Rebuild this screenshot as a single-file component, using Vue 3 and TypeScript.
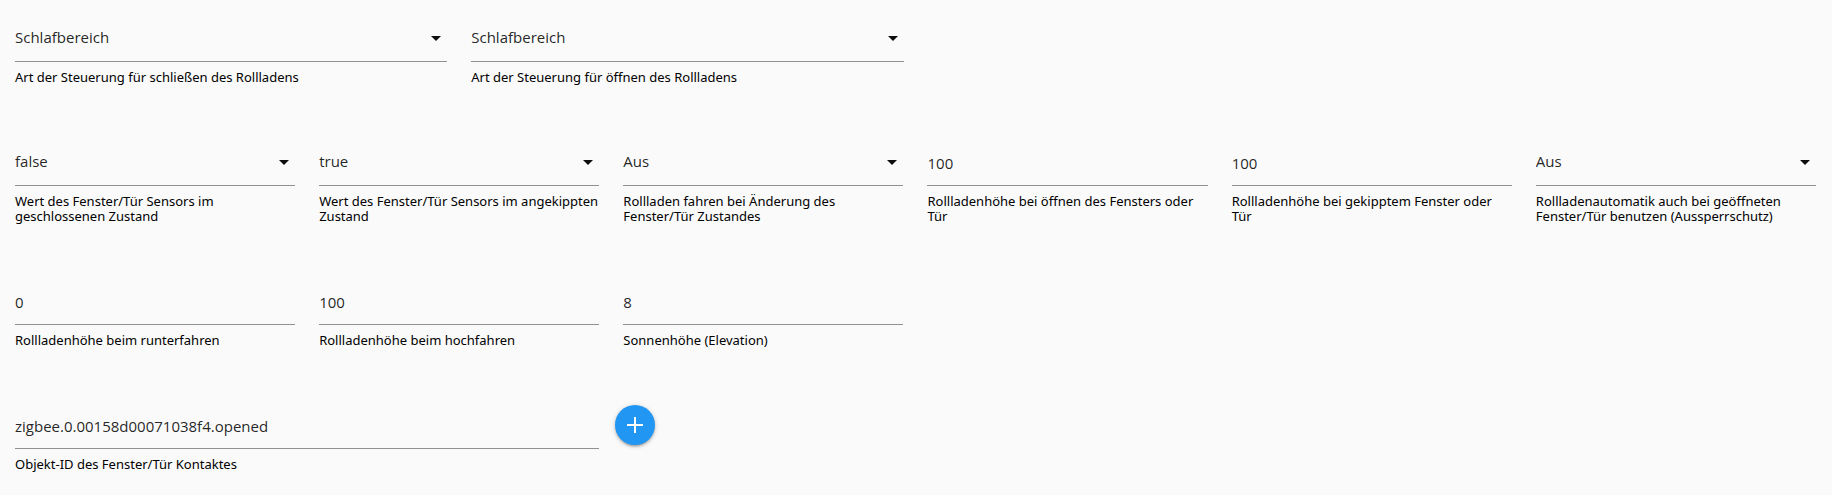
<script setup lang="ts">
import { reactive } from 'vue'

interface Field {
  id: string
  kind: 'select' | 'text'
  span: 'narrow' | 'wide'
  value: string
  label: string
  options?: string[]
}

const control = ['Schlafbereich', 'Wohnbereich', 'Aus']
const states = ['true', 'false']
const modes = ['Aus', 'An']

const rows = reactive<Field[][]>([
  [
    { id: 'typeDown', kind: 'select', span: 'wide', value: 'Schlafbereich', options: control, label: 'Art der Steuerung für schließen des Rollladens' },
    { id: 'typeUp', kind: 'select', span: 'wide', value: 'Schlafbereich', options: control, label: 'Art der Steuerung für öffnen des Rollladens' },
  ],
  [
    { id: 'closedState', kind: 'select', span: 'narrow', value: 'false', options: states, label: 'Wert des Fenster/Tür Sensors im geschlossenen Zustand' },
    { id: 'tiltedState', kind: 'select', span: 'narrow', value: 'true', options: states, label: 'Wert des Fenster/Tür Sensors im angekippten Zustand' },
    { id: 'moveOnChange', kind: 'select', span: 'narrow', value: 'Aus', options: modes, label: 'Rollladen fahren bei Änderung des Fenster/Tür Zustandes' },
    { id: 'heightOpen', kind: 'text', span: 'narrow', value: '100', label: 'Rollladenhöhe bei öffnen des Fensters oder Tür' },
    { id: 'heightTilted', kind: 'text', span: 'narrow', value: '100', label: 'Rollladenhöhe bei gekipptem Fenster oder Tür' },
    { id: 'lockout', kind: 'select', span: 'narrow', value: 'Aus', options: modes, label: 'Rollladenautomatik auch bei geöffneten Fenster/Tür benutzen (Aussperrschutz)' },
  ],
  [
    { id: 'heightDown', kind: 'text', span: 'narrow', value: '0', label: 'Rollladenhöhe beim runterfahren' },
    { id: 'heightUp', kind: 'text', span: 'narrow', value: '100', label: 'Rollladenhöhe beim hochfahren' },
    { id: 'elevation', kind: 'text', span: 'narrow', value: '8', label: 'Sonnenhöhe (Elevation)' },
  ],
])

const contact = reactive({ value: 'zigbee.0.00158d00071038f4.opened' })
</script>

<template>
  <form class="settings" @submit.prevent>
    <div v-for="(row, index) in rows" :key="index" class="row">
      <div v-for="field in row" :key="field.id" class="field" :class="field.span">
        <div v-if="field.kind === 'select'" class="select-box">
          <select :id="field.id" v-model="field.value" class="control">
            <option v-for="option in field.options" :key="option" :value="option">{{ option }}</option>
          </select>
          <svg class="caret" viewBox="0 0 24 24" aria-hidden="true"><path d="M7 10l5 5 5-5z" /></svg>
        </div>
        <input v-else :id="field.id" v-model="field.value" class="control" type="text" />
        <label class="caption" :for="field.id">{{ field.label }}</label>
      </div>
    </div>
    <div class="contact-row">
      <div class="field contact">
        <input id="contactId" v-model="contact.value" class="control" type="text" />
        <label class="caption" for="contactId">Objekt-ID des Fenster/Tür Kontaktes</label>
      </div>
      <button class="add" type="button" aria-label="Objekt-ID auswählen">
        <svg viewBox="0 0 24 24" aria-hidden="true"><path d="M20 13h-7v7h-2v-7H4v-2h7V4h2v7h7z" /></svg>
      </button>
    </div>
  </form>
</template>

<style>
body {
  margin: 0;
  background: #fafafa;
}
</style>

<style scoped>
.settings {
  display: flex;
  flex-direction: column;
  gap: 55px;
  padding: 16px 16px 16px 15px;
  color: rgba(0, 0, 0, 0.87);
  font-family: "Open Sans", "Noto Sans", sans-serif;
}

.row {
  display: grid;
  grid-template-columns: repeat(12, minmax(0, 1fr));
  column-gap: 24px;
}

.wide {
  grid-column: span 3;
}

.narrow {
  grid-column: span 2;
}

.field {
  display: flex;
  flex-direction: column;
  gap: 8px;
  min-width: 0;
}

.select-box {
  position: relative;
}

.control {
  display: block;
  box-sizing: border-box;
  width: 100%;
  height: 46px;
  margin: 0;
  padding: 0;
  border: 0;
  border-bottom: 1px solid #919191;
  border-radius: 0;
  outline: none;
  appearance: none;
  background: transparent;
  color: inherit;
  font-family: inherit;
  font-size: 15px;
}

select.control {
  padding-bottom: 3px;
}

.caret {
  position: absolute;
  top: 10px;
  right: -1px;
  width: 24px;
  height: 24px;
  fill: rgba(0, 0, 0, 0.95);
  pointer-events: none;
}

.caption {
  color: #000;
  font-family: "Noto Sans", sans-serif;
  font-size: 13px;
  line-height: 15px;
}

.contact-row {
  display: flex;
  align-items: flex-start;
  gap: 16px;
}

.contact {
  width: calc((100% - 48px) / 3);
}

.add {
  display: flex;
  align-items: center;
  justify-content: center;
  width: 40px;
  height: 40px;
  margin: 2px 0 0;
  padding: 0;
  border: 0;
  border-radius: 50%;
  background: #2196f3;
  box-shadow: 0 2px 2px rgba(0, 0, 0, 0.14), 0 3px 1px -2px rgba(0, 0, 0, 0.12), 0 1px 5px rgba(0, 0, 0, 0.2);
  cursor: pointer;
}

.add svg {
  width: 24px;
  height: 24px;
  fill: #fff;
}
</style>
